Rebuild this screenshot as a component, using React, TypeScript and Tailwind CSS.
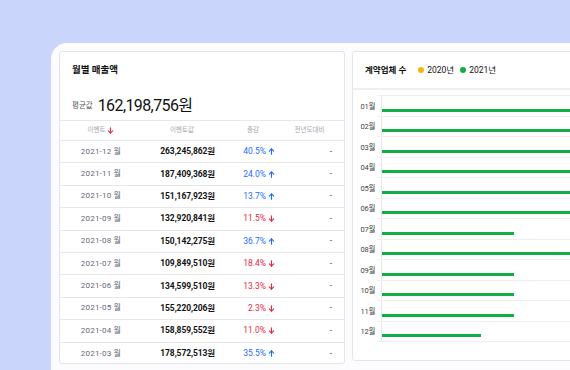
import React from "react";

const rows = [
  { d: "2021-12", v: "263,245,862원", p: "40.5%", up: true },
  { d: "2021-11", v: "187,409,368원", p: "24.0%", up: true },
  { d: "2021-10", v: "151,167,923원", p: "13.7%", up: true },
  { d: "2021-09", v: "132,920,841원", p: "11.5%", up: false },
  { d: "2021-08", v: "150,142,275원", p: "36.7%", up: true },
  { d: "2021-07", v: "109,849,510원", p: "18.4%", up: false },
  { d: "2021-06", v: "134,599,510원", p: "13.3%", up: false },
  { d: "2021-05", v: "155,220,206원", p: "2.3%", up: false },
  { d: "2021-04", v: "158,859,552원", p: "11.0%", up: false },
  { d: "2021-03", v: "178,572,513원", p: "35.5%", up: true },
];

const bars = [
  { m: "01", w: 300 },
  { m: "02", w: 300 },
  { m: "03", w: 300 },
  { m: "04", w: 300 },
  { m: "05", w: 300 },
  { m: "06", w: 300 },
  { m: "07", w: 132 },
  { m: "08", w: 300 },
  { m: "09", w: 132 },
  { m: "10", w: 132 },
  { m: "11", w: 132 },
  { m: "12", w: 99 },
];

function Arrow({ up, color }: { up: boolean; color: string }) {
  return (
    <svg width="7" height="7" viewBox="0 0 8 8" className="inline-block" fill="none" stroke={color} strokeWidth="1.3" strokeLinecap="round" strokeLinejoin="round">
      {up ? (
        <>
          <path d="M4 7V1" />
          <path d="M1.5 3.5L4 1l2.5 2.5" />
        </>
      ) : (
        <>
          <path d="M4 1v6" />
          <path d="M1.5 4.5L4 7l2.5-2.5" />
        </>
      )}
    </svg>
  );
}

export default function App() {
  const font = { fontFamily: "Roboto, 'Noto Sans CJK KR', sans-serif" };
  return (
    <div className="w-[570px] h-[370px] overflow-hidden bg-[#c9d5fb]" style={font}>
      <div className="ml-[51px] mt-[43px] w-[600px] h-[400px] bg-[#fcfcfe] rounded-tl-[16px] pt-[8px] pl-[8px] flex gap-[7px] items-start">
        {/* Left card */}
        <div className="w-[286px] h-[313px] bg-white border border-[#e3e5ea] rounded-[3px] flex flex-col overflow-hidden">
          <div className="h-[36px] shrink-0 pl-[12px] pt-[11px] text-[9.5px] leading-[14px] font-bold text-[#111]">월별 매출액</div>
          <div className="h-[32px] shrink-0 pl-[12px] flex items-center gap-[5px] pt-[4px]">
            <span className="text-[7.5px] text-[#555]">평균값</span>
            <span className="text-[16px] leading-[20px] tracking-[-0.6px] text-[#111]">162,198,756원</span>
          </div>
          <div className="h-[21px] shrink-0 border-t border-b border-[#e6e8ec] grid grid-cols-[82px_80px_62px_1fr] items-center text-[6.5px] text-[#a3a7b0]">
            <div className="flex items-center justify-center gap-[2px]">
              <span>이벤트</span>
              <Arrow up={false} color="#e5344a" />
            </div>
            <div className="text-center">이벤트값</div>
            <div className="text-center">증감</div>
            <div className="text-center pr-[9px]">전년도대비</div>
          </div>
          {rows.map((r, i) => (
            <div
              key={r.d}
              className={`h-[22.4px] shrink-0 grid grid-cols-[82px_80px_62px_1fr] items-center ${i < rows.length - 1 ? "border-b border-[#e6e8ec]" : ""}`}
            >
              <div className="text-center text-[8px] text-[#646978] tracking-[0.2px]">{r.d} 월</div>
              <div className="text-right pr-[7px] text-[8.5px] font-bold text-[#111] tracking-[-0.1px]">{r.v}</div>
              <div className={`flex items-center justify-end gap-[2px] pr-[9px] text-[8.5px] ${r.up ? "text-[#1d6cff]" : "text-[#e52a3f]"}`}>
                <span>{r.p}</span>
                <Arrow up={r.up} color={r.up ? "#1d6cff" : "#e52a3f"} />
              </div>
              <div className="text-right pr-[12px] text-[8px] text-[#111]">-</div>
            </div>
          ))}
        </div>

        {/* Right card */}
        <div className="w-[260px] h-[310px] bg-white border border-[#e3e5ea] rounded-[3px] flex flex-col">
          <div className="h-[38px] border-b-2 border-[#eceef2] flex items-center pl-[12px] gap-[6px] text-[8.5px] text-[#111]">
            <span className="font-bold mr-[6px]">계약업체 수</span>
            <span className="flex items-center gap-[3px]">
              <span className="w-[6px] h-[6px] rounded-full bg-[#f5b511]" />
              <span>2020년</span>
            </span>
            <span className="flex items-center gap-[3px]">
              <span className="w-[6px] h-[6px] rounded-full bg-[#12ad47]" />
              <span>2021년</span>
            </span>
          </div>
          <div className="pt-[5px] flex flex-col">
            <div className="ml-[24px] border-t border-[#eceef1]" />
            {bars.map((b) => (
              <div key={b.m} className="h-[20.5px] flex">
                <div className="w-[24px] shrink-0 flex items-center justify-end pr-[2px] text-[7.5px] text-[#444] tracking-[-0.3px]">
                  {b.m}월
                </div>
                <div className="flex-1 flex border-b border-[#eceef1]">
                  <div className="w-[4px] shrink-0" />
                  <div className="flex-1 border-l border-[#e6e8ec] pt-[12.5px]">
                    <div className="h-[3px] bg-[#12ad47]" style={{ width: b.w }} />
                  </div>
                </div>
              </div>
            ))}
          </div>
        </div>
      </div>
    </div>
  );
}
